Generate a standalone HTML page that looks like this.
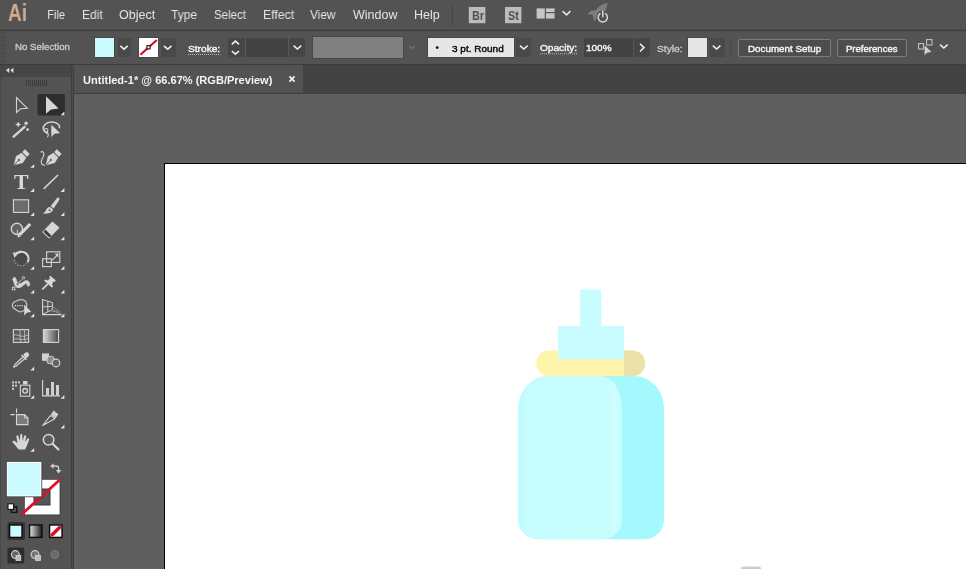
<!DOCTYPE html>
<html>
<head>
<meta charset="utf-8">
<title>Untitled-1* @ 66.67% (RGB/Preview)</title>
<style>
html,body{margin:0;padding:0;}
body{width:966px;height:569px;overflow:hidden;background:#5f5f5f;position:relative;font-family:"Liberation Sans",sans-serif;color:#e0e0e0;}
.abs{position:absolute;}
.t{will-change:transform;position:absolute;white-space:nowrap;transform-origin:0 0;line-height:1;}
#menubar{left:0;top:0;width:966px;height:30px;background:#535353;}
#menuline{left:0;top:29px;width:966px;height:2px;background:#3c3c3c;border-top:1px solid #4d4d4d;box-sizing:border-box;}
#ctrl{left:0;top:31px;width:966px;height:33px;background:#535353;}
#ctrlline{left:0;top:64px;width:966px;height:1px;background:#3c3c3c;}
#tabbar{left:74px;top:65px;width:892px;height:28px;background:#424242;}
#tabline{left:74px;top:93px;width:892px;height:1px;background:#3e3e3e;}
#tab{left:74px;top:65px;width:229px;height:28px;background:#535353;}
#tools{left:0;top:65px;width:73px;height:504px;background:#535353;border-left:1px solid #484848;box-sizing:border-box;}
#toolshead{left:0;top:65px;width:71px;height:12px;background:#464646;}
#toolsedge{left:71px;top:65px;width:3px;height:504px;background:#3f3f3f;}
#toolsedge2{left:72px;top:65px;width:1px;height:504px;background:#4b4b4b;}
#canvasedge{left:74px;top:94px;width:3px;height:475px;background:#616161;}
#artboard{left:164px;top:163px;width:802px;height:406px;background:#fff;border-left:1px solid #000;border-top:1px solid #000;box-sizing:border-box;}
.dd{position:absolute;top:38px;height:19px;background:#494949;border-radius:2px;}
.sw{position:absolute;top:38px;height:19px;box-shadow:0 0 0 1px #474747;}
.btn{position:absolute;top:39px;height:18px;box-sizing:border-box;border:1px solid #7a7a7a;border-radius:2px;background:#4d4d4d;}
svg{position:absolute;left:0;top:0;overflow:visible;}
</style>
</head>
<body>
<div class="abs" id="menubar"></div>
<div class="abs" id="menuline"></div>
<div class="abs" id="ctrl"></div>
<div class="abs" id="ctrlline"></div>
<div class="abs" id="tabbar"></div>
<div class="abs" id="tabline"></div>
<div class="abs" id="tab"></div>
<div class="abs" id="tools"></div>
<div class="abs" id="toolshead"></div>
<div class="abs" id="toolsedge"></div>
<div class="abs" id="toolsedge2"></div>
<div class="abs" id="canvasedge"></div>
<div class="abs" id="artboard"></div>

<!-- MENU -->
<div id="menu">
<span class="t" style="left:8px;top:1.6px;font-size:23.5px;font-weight:700;color:#d4ab8e;transform:scaleX(0.8085);">Ai</span>
<span class="t" style="left:47.2px;top:8.5px;font-size:12.5px;font-weight:400;color:#e4e4e4;transform:scaleX(0.8930);">File</span>
<span class="t" style="left:82.3px;top:8.5px;font-size:12.5px;font-weight:400;color:#e4e4e4;transform:scaleX(0.9700);">Edit</span>
<span class="t" style="left:119px;top:8.5px;font-size:12.5px;font-weight:400;color:#e4e4e4;transform:scaleX(1.0016);">Object</span>
<span class="t" style="left:170.8px;top:8.5px;font-size:12.5px;font-weight:400;color:#e4e4e4;transform:scaleX(0.9591);">Type</span>
<span class="t" style="left:214.2px;top:8.5px;font-size:12.5px;font-weight:400;color:#e4e4e4;transform:scaleX(0.9209);">Select</span>
<span class="t" style="left:263px;top:8.5px;font-size:12.5px;font-weight:400;color:#e4e4e4;transform:scaleX(0.9832);">Effect</span>
<span class="t" style="left:309.5px;top:8.5px;font-size:12.5px;font-weight:400;color:#e4e4e4;transform:scaleX(0.9488);">View</span>
<span class="t" style="left:353px;top:8.5px;font-size:12.5px;font-weight:400;color:#e4e4e4;transform:scaleX(0.9940);">Window</span>
<span class="t" style="left:414px;top:8.5px;font-size:12.5px;font-weight:400;color:#e4e4e4;transform:scaleX(0.9915);">Help</span>
</div>

<!-- CONTROL BAR -->
<div id="control">
<span class="t" style="left:15.3px;top:42.1px;font-size:9.6px;font-weight:400;color:#cdcdcd;transform:scaleX(1.0109);-webkit-text-stroke:0.3px;">No Selection</span>
<div class="sw" style="left:95px;width:19px;background:#ccfbff;"></div>
<div class="dd" style="left:118px;width:13px;"></div>
<div class="sw" style="left:139px;width:19px;background:#fff;"></div>
<div class="dd" style="left:161px;width:15px;"></div>
<span class="t" style="left:188.4px;top:44.8px;font-size:9.2px;font-weight:400;color:#f4f4f4;transform:scaleX(1.1062);-webkit-text-stroke:0.4px;">Stroke:</span>
<div class="dd" style="left:228px;width:77px;background:#464646;"></div>
<div class="dd" style="left:245px;width:44px;border-radius:0;background:#434343;border-left:1px solid #5a5a5a;border-right:1px solid #585858;box-sizing:border-box;"></div>
<div class="sw" style="left:313px;top:37px;height:21px;width:90px;background:#808080;"></div>
<div class="sw" style="left:428px;width:86px;background:#e6e6e6;"></div>
<span class="t" style="left:451.5px;top:44.7px;font-size:9.2px;font-weight:400;color:#0a0a0a;transform:scaleX(1.0881);-webkit-text-stroke:0.4px;">3 pt. Round</span>
<div class="dd" style="left:516px;width:15px;"></div>
<span class="t" style="left:539.5px;top:44.2px;font-size:9.2px;font-weight:400;color:#f4f4f4;transform:scaleX(1.1008);-webkit-text-stroke:0.4px;">Opacity:</span>
<div class="dd" style="left:584px;width:66px;background:#464646;"></div>
<div class="dd" style="left:584px;width:50px;border-radius:0;background:#434343;border-right:1px solid #585858;box-sizing:border-box;"></div>
<span class="t" style="left:586px;top:44.2px;font-size:9.2px;font-weight:400;color:#f4f4f4;transform:scaleX(1.0851);-webkit-text-stroke:0.4px;">100%</span>
<span class="t" style="left:656.5px;top:44.7px;font-size:9.2px;font-weight:400;color:#cdcdcd;transform:scaleX(1.1094);-webkit-text-stroke:0.3px;">Style:</span>
<div class="sw" style="left:688px;width:19px;background:#e6e6e6;"></div>
<div class="dd" style="left:709px;width:16px;"></div>
<div class="btn" style="left:738px;width:93px;"></div>
<span class="t" style="left:747.5px;top:44.7px;font-size:9.2px;font-weight:400;color:#f4f4f4;transform:scaleX(1.0681);-webkit-text-stroke:0.4px;">Document Setup</span>
<div class="btn" style="left:837px;width:70px;"></div>
<span class="t" style="left:845.5px;top:44.7px;font-size:9.2px;font-weight:400;color:#f4f4f4;transform:scaleX(1.0394);-webkit-text-stroke:0.4px;">Preferences</span>
</div>

<!-- TOPICONS -->
<svg id="topicons" width="966" height="66" viewBox="0 0 966 66" fill="none" stroke="none">
<!-- menubar separator -->
<path d="M452.5 4 V25" stroke="#474747" stroke-width="1"/>
<!-- Bridge / Stock buttons -->
<rect x="468.8" y="7" width="16.6" height="16.2" fill="#bcbcbc"/>
<rect x="505" y="7" width="16.4" height="16.2" fill="#bcbcbc"/>
<!-- workspace switcher -->
<rect x="536.6" y="8.4" width="8.2" height="10.2" fill="#c6c6c6"/>
<rect x="546" y="8.4" width="8.6" height="3.6" fill="#c6c6c6"/>
<rect x="546" y="13.2" width="8.6" height="5.4" fill="#c6c6c6"/>
<path d="M562.6 11.2 L566.5 14.8 L570.4 11.2" stroke="#e6e6e6" stroke-width="1.6"/>
<!-- GPU rocket -->
<path transform="translate(0 -2)" d="M607.4 4.8 C603 5.6 598.6 8.2 595.6 12.2 L590.8 12.8 L587 16.4 L592.6 16.6 C592.4 17.6 592.8 18.6 593.4 19.2 L593.8 23.2 L597 20.4 C599.4 19.6 601.6 18 603.6 15.6 C606 12.6 607.4 8.8 607.4 4.8 Z" fill="#7c7c7c"/>
<circle cx="603" cy="17" r="6.6" fill="#535353"/>
<path transform="translate(-0.2 -0.5)" d="M600.2 14.2 A4.6 4.6 0 1 0 605.8 14.2" stroke="#d8d8d8" stroke-width="1.5" stroke-linecap="round"/>
<path transform="translate(-0.2 -0.5)" d="M603 11.6 V17.2" stroke="#d8d8d8" stroke-width="1.5" stroke-linecap="round"/>
<!-- control bar gripper -->
<path d="M1.5 32 V64 M3.5 32 V64 M5.5 32 V64" stroke="#454545" stroke-width="1.4" stroke-dasharray="1 1"/>
<!-- chevrons -->
<g stroke="#f0f0f0" stroke-width="1.55">
<path d="M120.3 45.9 L124 49.2 L127.7 45.9"/>
<path d="M163.9 45.9 L167.7 49.2 L171.5 45.9"/>
<path d="M231.8 44.3 L235.4 41.1 L239 44.3"/>
<path d="M231.8 51 L235.4 54.2 L239 51"/>
<path d="M293.6 45.7 L297.4 49 L301.2 45.7"/>
<path d="M520 45.7 L523.8 49 L527.6 45.7"/>
<path d="M640 43.7 L644 47.6 L640 51.5"/>
<path d="M712.8 45.7 L716.6 49 L720.4 45.7"/>
<path d="M940 44.7 L943.8 48 L947.6 44.7"/>
</g>
<path d="M409.4 45.8 L412.3 48.6 L415.2 45.8" stroke="#6e6e6e" stroke-width="1.4"/>
<!-- stroke swatch none -->
<path d="M140.4 54.8 L156.8 40" stroke="#d60a22" stroke-width="2.1"/>
<rect x="146.9" y="45.7" width="3.2" height="3.2" fill="#ffffff" stroke="#2a0a0a" stroke-width="1.1"/>
<!-- dotted underlines -->
<g stroke="#bcbcbc" stroke-width="1" stroke-dasharray="1 1">
<path d="M188 54.5 H220.5"/>
<path d="M540 53.8 H577"/>
</g>
<!-- brush bullet -->
<circle cx="437.2" cy="47.6" r="1.4" fill="#111"/>
<!-- separators -->
<path d="M730.5 37 V59" stroke="#484848" stroke-width="1"/>
<!-- align-to selection icon -->
<rect x="918.6" y="43.6" width="5" height="5.4" stroke="#c8c8c8" stroke-width="1"/>
<rect x="926.6" y="39.6" width="5.4" height="5.4" stroke="#c8c8c8" stroke-width="1"/>
<path d="M924.6 45.6 L924.6 55.2 L927.4 52.6 L931.6 52 Z" fill="#d0d0d0"/>
<!-- tab close -->
<path d="M289.4 76.4 L294.6 81.6 M294.6 76.4 L289.4 81.6" stroke="#f2f2f2" stroke-width="1.7"/>
</svg>
<span class="t" style="left:471.5px;top:9.5px;font-size:12px;font-weight:700;color:#4e4e4e;transform:scaleX(0.8993);">Br</span>
<span class="t" style="left:507.8px;top:9.5px;font-size:12px;font-weight:700;color:#4e4e4e;transform:scaleX(0.9000);">St</span>
<!-- /TOPICONS -->

<!-- TAB -->
<span class="t" style="left:83.2px;top:74.7px;font-size:10.6px;font-weight:700;color:#f4f4f4;transform:scaleX(1.0426);">Untitled-1* @ 66.67% (RGB/Preview)</span>

<!-- TOOLICONS -->
<!-- TOOL PANEL ICONS -->
<svg id="toolicons" width="74" height="569" viewBox="0 0 74 569" fill="none" stroke="none">
<!-- collapse arrows -->
<path d="M9.2 67.7 L6 70.3 L9.2 72.9 Z M13.4 67.7 L10.2 70.3 L13.4 72.9 Z" fill="#e0e0e0"/>
<!-- gripper -->
<g stroke="#3c3c3c" stroke-width="1">
<path d="M26.5 80v6M28.5 80v6M30.5 80v6M32.5 80v6M34.5 80v6M36.5 80v6M38.5 80v6M40.5 80v6M42.5 80v6M44.5 80v6M46.5 80v6"/>
</g>
<!-- selected tool highlight -->
<rect x="37.5" y="94" width="27.5" height="21.5" rx="2" fill="#2e2e2e"/>
<!-- selection (outline arrow) -->
<path d="M16.5 97.5 L16.5 112.5 L20.6 108.8 L27.3 108.3 Z" stroke="#d4d4d4" stroke-width="1.1" stroke-linejoin="miter"/>
<!-- direct selection (filled arrow) -->
<path d="M46 96.3 L46 113.8 L50.9 109.6 L58.6 108.6 Z" fill="#d6d6d6"/>
<!-- corner triangles -->
<g fill="#e4e4e4">
<path d="M64.4 111.5v3.8h-3.8z"/>
<path d="M34.2 163.9v3.8h-3.8z"/>
<path d="M34.2 188.1v3.8h-3.8z"/><path d="M64.4 188.1v3.8h-3.8z"/>
<path d="M34.2 212.2v3.8h-3.8z"/><path d="M64.4 212.2v3.8h-3.8z"/>
<path d="M34.2 236.4v3.8h-3.8z"/><path d="M64.4 236.4v3.8h-3.8z"/>
<path d="M34.2 265.9v3.8h-3.8z"/><path d="M64.4 265.9v3.8h-3.8z"/>
<path d="M34.2 289.8v3.8h-3.8z"/><path d="M64.4 289.8v3.8h-3.8z"/>
<path d="M34.2 313.5v3.8h-3.8z"/><path d="M64.4 313.5v3.8h-3.8z"/>
<path d="M34.2 366.6v3.8h-3.8z"/>
<path d="M34.2 395v3.8h-3.8z"/><path d="M64.4 395v3.8h-3.8z"/>
<path d="M64.4 424.6v3.8h-3.8z"/>
<path d="M34.2 448v3.8h-3.8z"/>
</g>
<!-- magic wand -->
<path d="M13.6 136.6 L24.6 126.8" stroke="#d4d4d4" stroke-width="2.4" stroke-linecap="round"/>
<path d="M18.2 121.4 L19.1 123.6 L21.3 124.5 L19.1 125.4 L18.2 127.6 L17.3 125.4 L15.1 124.5 L17.3 123.6 Z" fill="#d4d4d4"/>
<circle cx="26.1" cy="123.3" r="1.7" fill="#d4d4d4"/>
<circle cx="27.6" cy="129.6" r="1.4" fill="#d4d4d4"/>
<!-- lasso -->
<path d="M47.5 133.5 C43 131.5 42 127.5 45 124.5 C48 121.5 55 121 58.5 124.5 C59.5 125.6 59.8 127 59.4 128.2" stroke="#d6d6d6" stroke-width="1.6"/>
<circle cx="46.2" cy="130.2" r="1.7" stroke="#d0d0d0" stroke-width="1.1"/>
<path d="M46.8 132 C48.5 133.5 48.6 135.5 47.4 137.2" stroke="#d0d0d0" stroke-width="1.1"/>
<path d="M51 124.2 L51 137.4 L54.6 134 L60.8 133.4 Z" fill="#d6d6d6" stroke="#535353" stroke-width="0.6"/>
<!-- pen -->
<g transform="translate(20.4 158.6) rotate(45) scale(0.93)">
<rect x="-3.6" y="-10.6" width="7.2" height="4.2" fill="#d6d6d6"/>
<path d="M-3.6 -5.4 H3.6 L5.2 1.5 L0 10.2 L-5.2 1.5 Z" fill="#d6d6d6"/>
<path d="M0 10 V3" stroke="#535353" stroke-width="0.9"/>
<circle cx="0" cy="2.2" r="1.2" fill="#535353"/>
</g>
<!-- curvature -->
<g transform="translate(52.3 158.6) rotate(45) scale(0.93)">
<rect x="-3.6" y="-10.6" width="7.2" height="4.2" fill="#d6d6d6"/>
<path d="M-3.6 -5.4 H3.6 L5.2 1.5 L0 10.2 L-5.2 1.5 Z" fill="#d6d6d6"/>
<path d="M0 10 V3" stroke="#535353" stroke-width="0.9"/>
<circle cx="0" cy="2.2" r="1.2" fill="#535353"/>
</g>
<path d="M40.6 152.2 C43 150.8 44.6 152.6 43.6 155.6 C42.6 158.6 40.4 160.8 41.4 163.2 C42 164.6 43.4 165.2 44.6 165.4" stroke="#d6d6d6" stroke-width="1.1"/>
<!-- line -->
<path d="M44.2 188.4 L57.7 175.3" stroke="#d4d4d4" stroke-width="1.6" stroke-linecap="round"/>
<!-- rectangle -->
<rect x="13.4" y="199.8" width="15.2" height="12.6" fill="#6c6c6c" stroke="#d6d6d6" stroke-width="1.1"/>
<!-- paintbrush -->
<path d="M58.9 197.6 C59.8 198.3 59.6 199.6 58.8 200.8 L53.6 208.4 L50.6 206.2 L56.6 198.6 C57.4 197.6 58.2 197.1 58.9 197.6 Z" fill="#d6d6d6"/>
<path d="M50 207 L53 209.2 C52.8 211.6 50.2 213.2 47.4 213.4 C45.6 213.5 43.8 213.6 42.6 213.8 C44.6 212.6 45.6 211 46.4 209.4 C47.2 207.8 48.4 206.8 50 207 Z" fill="#d6d6d6"/>
<circle cx="49.6" cy="210.2" r="1" fill="#535353"/>
<!-- shaper -->
<circle cx="16.9" cy="228.9" r="5.6" stroke="#d0d0d0" stroke-width="1.4" fill="#626262"/>
<path d="M30.2 224 L19.4 235" stroke="#d6d6d6" stroke-width="3.2"/>
<path d="M18 233.8 L20.8 236.4 L17.6 237.6 Z" fill="#d6d6d6"/>
<path d="M17.3 234.6 V229.8" stroke="#d6d6d6" stroke-width="0.9"/>
<!-- eraser -->
<path d="M52.4 221.4 L59.6 227.8 L49.2 238.2 L42.4 231.8 Z" fill="#d6d6d6"/>
<path d="M45.4 229.6 L51.4 235.4 L49.2 237.4 L43.4 231.8 Z" fill="#3e3e3e"/>
<path d="M42.4 231.8 L49.2 238.2" stroke="#d6d6d6" stroke-width="1"/>
<!-- rotate -->
<circle cx="21.2" cy="259.2" r="5.6" fill="#4a4a4a"/>
<path d="M14.6 255.4 C17.2 251.4 22.6 250.6 26 253.4 C28.6 255.6 29.2 259.4 27.6 262.2" stroke="#d8d8d8" stroke-width="2.1"/>
<path d="M12.8 252.2 L18.4 253.2 L14.4 257.8 Z" fill="#d6d6d6"/>
<path d="M27 263 C25 265.8 20.6 266.6 17.4 264.8 C15.4 263.6 14.2 261.6 14 259.6" stroke="#9a9a9a" stroke-width="1.2" stroke-dasharray="1.6 1.4"/>
<!-- scale -->
<rect x="46.6" y="251.8" width="13.2" height="10.6" stroke="#d6d6d6" stroke-width="1.1"/>
<rect x="42.6" y="258.8" width="8.8" height="7.8" stroke="#d6d6d6" stroke-width="1.1"/>
<path d="M52.4 260.2 L57 255.4" stroke="#d6d6d6" stroke-width="1.2"/>
<path d="M54.6 253.6 H58.4 V257.4 Z" fill="#d6d6d6"/>
<!-- width / warp -->
<path d="M14.4 277 C16.8 278.6 15.8 282 18.4 283.6 C21 285 22.8 281.6 25.6 280.8 C28.4 280 29.8 282.4 29.6 285.4 L27.6 286 C27.4 284 26.6 283 25.4 283.6 C23 285 21.4 288.2 17.8 287.6 C13.8 286.8 14.8 282 12.6 279.6 Z" fill="#d6d6d6" stroke="#d6d6d6" stroke-width="0.9" stroke-linejoin="round"/>
<circle cx="17.6" cy="284" r="1.4" fill="#535353" stroke="#d6d6d6" stroke-width="0.8"/>
<circle cx="23.4" cy="277.8" r="1.2" stroke="#d6d6d6" stroke-width="0.9"/>
<path d="M21.8 279.4 L19 282.4" stroke="#d6d6d6" stroke-width="0.9"/>
<rect x="12.3" y="287.2" width="2.6" height="2.6" stroke="#d6d6d6" stroke-width="0.9"/>
<!-- pin -->
<path d="M50.4 275.8 L55.8 280.6 L54.4 282 L53.4 281.6 L52 284.8 L53.2 286.6 L51.8 287.6 L44.2 280.8 L45.4 279.6 L47.6 280.4 L50 278.4 L49.2 277 Z" fill="#d6d6d6"/>
<path d="M47.4 284.4 L42.8 288.8" stroke="#d6d6d6" stroke-width="1.8" stroke-linecap="round"/>
<!-- shape builder -->
<path d="M20.4 299.6 C24 299.2 26.6 301.6 26.8 304.6 C27 308 24.4 311.4 20.8 311.8 C18.4 312 17.2 310.6 15.6 309.6 C13.4 308.4 12.2 307.2 12.4 305 C12.6 302.6 14.6 301.6 16.4 301 C17.8 300.4 18.8 299.8 20.4 299.6 Z" stroke="#c4c4c4" stroke-width="1.2"/>
<path d="M15 305.6 H23" stroke="#e8e8e8" stroke-width="1.2" stroke-dasharray="1.1 1.1"/>
<path d="M24.2 304.6 L24.2 315.4 L27.2 312.6 L31.4 312 Z" fill="#d6d6d6"/>
<!-- perspective grid -->
<path d="M42.6 299 V315 M42 314.6 H62" stroke="#d6d6d6" stroke-width="1.1"/>
<path d="M42.6 299.6 L52.4 302.6 V309.6 L42.6 314.4" stroke="#d0d0d0" stroke-width="1"/>
<path d="M47.8 301.2 V312 M42.6 307 L52.4 306.2" stroke="#d0d0d0" stroke-width="1"/>
<path d="M52.4 306.4 L60 312 M52.4 309.6 L62 314.6 M50 310.6 L58 312.4" stroke="#a0a0a0" stroke-width="0.8"/>
<!-- mesh -->
<rect x="13.4" y="329.6" width="15.2" height="12.8" stroke="#d6d6d6" stroke-width="1.1" fill="#5c5c5c"/>
<path d="M13.4 335.4 C17 333 21 339 28.6 334.6 M19 329.6 C22 333 18 337 21.6 342.4 M24 329.6 C26 333 23 338 25.4 342.4 M13.4 339.4 C17 337.6 22 341 28.6 338.4" stroke="#c0c0c0" stroke-width="0.9"/>
<!-- gradient -->
<defs><linearGradient id="gr1" x1="0" x2="1" y1="0" y2="0"><stop offset="0" stop-color="#d8d8d8"/><stop offset="1" stop-color="#4a4a4a"/></linearGradient></defs>
<rect x="43.4" y="329.6" width="15.2" height="12.8" fill="url(#gr1)" stroke="#d6d6d6" stroke-width="1.1"/>
<!-- eyedropper -->
<path d="M24.6 353.2 C26 351.8 28 352 28.8 353.4 C29.4 354.6 29 356 27.8 357 L26.2 358.4 L23.2 355 Z" fill="#d6d6d6"/>
<path d="M21.6 355 L26.4 359.8" stroke="#d6d6d6" stroke-width="1.6"/>
<path d="M22.8 357 L15 364.4 L13.6 367.2 L16.2 366 L24.6 358.8" stroke="#d6d6d6" stroke-width="1.2" stroke-linejoin="round"/>
<!-- blend -->
<rect x="42" y="353.4" width="7" height="7.4" fill="#d0d0d0"/>
<rect x="47" y="356.4" width="7" height="7.4" rx="2.4" fill="#8c8c8c" stroke="#d0d0d0" stroke-width="1"/>
<circle cx="56" cy="363" r="3.8" fill="#626262" stroke="#d6d6d6" stroke-width="1.2"/>
<!-- symbol sprayer -->
<g fill="#d0d0d0">
<rect x="12" y="381.4" width="2" height="2"/><rect x="15" y="381.4" width="2" height="2"/><rect x="18" y="381.4" width="2" height="2"/>
<rect x="12" y="384.6" width="2" height="2"/><rect x="15" y="384.6" width="2" height="2"/>
<rect x="12" y="387.8" width="2" height="2"/>
</g>
<rect x="23" y="381" width="4.4" height="3.4" fill="#d6d6d6"/>
<rect x="20.4" y="385.2" width="9.4" height="11" stroke="#d6d6d6" stroke-width="1.1"/>
<circle cx="25.1" cy="390.8" r="2.3" stroke="#d6d6d6" stroke-width="1.4"/>
<!-- column graph -->
<path d="M42.6 380 V396.4 M42 395.9 H60" stroke="#d6d6d6" stroke-width="1.1"/>
<rect x="46" y="388" width="3" height="7.4" fill="#d0d0d0"/>
<rect x="51" y="382" width="3" height="13.4" fill="#d0d0d0"/>
<rect x="56" y="385" width="3" height="10.4" fill="#d0d0d0"/>
<!-- artboard -->
<path d="M16.5 414.6 H24.6 L28 418 V424.6 H16.5 Z" fill="#7c7c7c" stroke="#d6d6d6" stroke-width="1.1"/>
<path d="M24.6 414.6 V418 H28" stroke="#d6d6d6" stroke-width="0.9"/>
<path d="M16.5 408.6 V413 M10.4 414.6 H14.8" stroke="#d6d6d6" stroke-width="1.1"/>
<!-- slice -->
<path d="M53.6 410.4 L58.4 414.2 L55.6 418.4 L50.8 414.6 Z" fill="#d0d0d0"/>
<path d="M50.6 415.4 L54.8 418.8 L42.6 425.6 Z" stroke="#d6d6d6" stroke-width="1.1" stroke-linejoin="round"/>
<!-- hand -->
<path d="M18 448.8 C16 446.4 14.4 444 12.6 442.2 C12.2 441 13.6 440.2 14.8 441 L17.4 443.2 L16.4 436.6 C16.2 435.2 18 434.8 18.4 436.2 L19.8 441 L20.2 435 C20.3 433.6 22.2 433.6 22.3 435 L22.6 441 L24.2 436 C24.6 434.8 26.4 435.2 26.2 436.6 L25.2 442 L27.4 438.8 C28.2 437.8 29.6 438.6 29.2 439.8 L26.8 446 C26.2 447.6 25.6 448.6 25 449.6 H18.6 Z" fill="#d6d6d6"/>
<!-- zoom -->
<circle cx="48.6" cy="439.8" r="5.3" stroke="#d6d6d6" stroke-width="1.5" fill="#5c5c5c"/>
<path d="M52.8 444 L58.4 449.4" stroke="#d6d6d6" stroke-width="2.2" stroke-linecap="round"/>
</svg>
<span class="t" style="left:13.6px;top:172px;font-size:20px;font-weight:700;color:#d8d8d8;transform:scaleX(1.0967);font-family:'Liberation Serif',serif;">T</span>
<!-- /TOOLICONS -->

<!-- TOOLLOWER -->
<svg id="toollower" width="74" height="569" viewBox="0 0 74 569" fill="none" stroke="none">
<defs>
<linearGradient id="gr2" x1="0" x2="1" y1="0" y2="0"><stop offset="0" stop-color="#e4e4e4"/><stop offset="1" stop-color="#1c1c1c"/></linearGradient>
<clipPath id="clipnone"><rect x="50.5" y="526" width="10.5" height="10.5"/></clipPath>
</defs>
<!-- stroke swatch -->
<rect x="24" y="479" width="36.4" height="36.4" fill="#3a3a3a"/>
<path d="M24.8 479.8 H59.6 V514.6 H24.8 Z M34 489 V505 H50 V489 Z" fill="#ffffff" fill-rule="evenodd"/>
<rect x="34" y="489" width="16" height="16" fill="#555555" stroke="#3a3a3a" stroke-width="1"/>
<path d="M21.2 514.8 L60.4 479.2" stroke="#dc1028" stroke-width="2.8"/>
<!-- fill swatch -->
<rect x="6" y="461" width="36.2" height="36.2" fill="#3a3a3a"/>
<rect x="6.8" y="461.8" width="34.6" height="34.6" fill="#ffffff"/>
<rect x="7.8" y="462.8" width="32.6" height="32.6" fill="#ccfbff"/>
<!-- swap arrows -->
<path d="M53 466 H56.4 C58 466 58.6 466.8 58.6 468.4 V470.6" stroke="#d0d0d0" stroke-width="1.3"/>
<path d="M50.2 466 L53.6 463.2 V468.8 Z" fill="#d0d0d0"/>
<path d="M55.8 470 H61.4 L58.6 473.6 Z" fill="#d0d0d0"/>
<!-- default fill/stroke -->
<rect x="11.2" y="506.8" width="5.6" height="5.6" fill="#535353" stroke="#111" stroke-width="1.3"/>
<rect x="8" y="503.8" width="5.6" height="5.6" fill="#ffffff" stroke="#111" stroke-width="1.1"/>
<!-- color mode buttons -->
<rect x="7.5" y="522" width="17.5" height="18" rx="1.5" fill="#333333"/>
<rect x="9.6" y="525" width="12.4" height="12.4" fill="#ccfbff" stroke="#0c0c0c" stroke-width="1.4"/>
<rect x="29.6" y="525" width="12.4" height="12.4" fill="url(#gr2)" stroke="#0c0c0c" stroke-width="1.4"/>
<rect x="49.6" y="525" width="12.4" height="12.4" fill="#ffffff" stroke="#0c0c0c" stroke-width="1.4"/>
<path d="M49.6 537.4 L62 525" stroke="#dc1028" stroke-width="3.4" clip-path="url(#clipnone)"/>
<!-- drawing modes -->
<rect x="7.5" y="547.4" width="16.8" height="16" rx="1.5" fill="#2e2e2e"/>
<circle cx="15.4" cy="554.6" r="3.9" stroke="#d0d0d0" stroke-width="1.2" fill="#666"/>
<rect x="16" y="555.6" width="4.8" height="4.8" fill="#bdbdbd" stroke="#d8d8d8" stroke-width="0.8"/>
<circle cx="35" cy="554.6" r="3.9" stroke="#d0d0d0" stroke-width="1.2" fill="#777"/>
<rect x="35.6" y="555.6" width="4.8" height="4.8" fill="#bdbdbd" stroke="#d8d8d8" stroke-width="0.8"/>
<circle cx="54.8" cy="554.6" r="3.9" stroke="#7a7a7a" stroke-width="1.2" fill="#6a6a6a"/>
</svg>
<!-- /TOOLLOWER -->

<!-- BOTTLE -->
<svg id="bottle" width="966" height="569" viewBox="0 0 966 569">
<defs>
<linearGradient id="bl" x1="518" x2="622" y1="0" y2="0" gradientUnits="userSpaceOnUse"><stop offset="0" stop-color="#bdfbfd"/><stop offset="0.09" stop-color="#c6fcfd"/><stop offset="0.86" stop-color="#c7fdfd"/><stop offset="0.93" stop-color="#d0fdff"/><stop offset="1" stop-color="#c4fdfd"/></linearGradient>
</defs>
<rect x="536.2" y="350.4" width="109" height="25.8" rx="12.9" fill="#fef4ac"/>
<path d="M624 350.4 H632.3 A12.9 12.9 0 0 1 632.3 376.2 H624 Z" fill="#ece2a8"/>
<rect x="580.2" y="289.6" width="21" height="37" fill="#c8fcff"/>
<rect x="558" y="326" width="66" height="33.2" fill="#c8fcff"/>
<path d="M548 376 H634 A30 32 0 0 1 664 408 V519.8 A19.4 19.4 0 0 1 644.6 539.2 H537.8 A19.4 19.4 0 0 1 518.4 519.8 V408 A30 32 0 0 1 548 376 Z" fill="#a6f8ff"/>
<path d="M548 376 H600 A22 32 0 0 1 622 408 V519.8 A19.4 19.4 0 0 1 602.6 539.2 H537.8 A19.4 19.4 0 0 1 518.4 519.8 V408 A30 32 0 0 1 548 376 Z" fill="url(#bl)"/>
<path d="M741 569 V568.4 Q741 566.6 743 566.6 H759 Q761 566.6 761 568.4 V569 Z" fill="#cdcdcd"/>
</svg>
</body>
</html>
